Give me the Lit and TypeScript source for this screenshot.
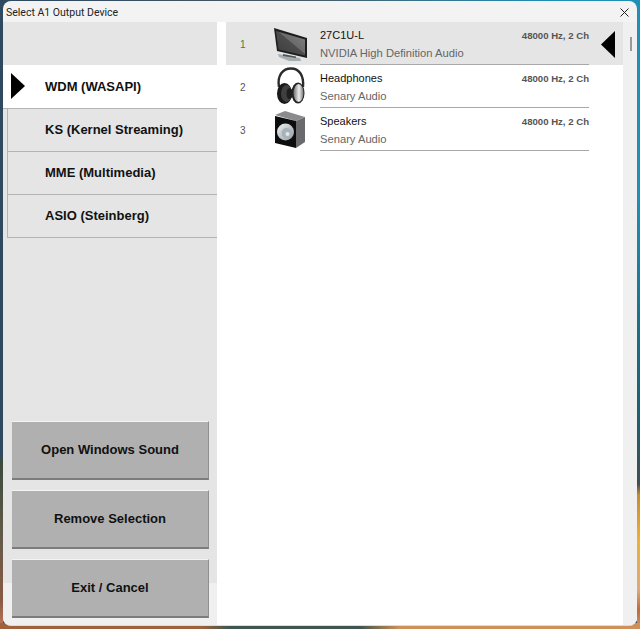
import { LitElement, html, css, svg } from "lit";
import { customElement } from "lit/decorators.js";

const monitor = svg`<svg width="48" height="43" viewBox="0 0 48 43">
<defs><linearGradient id="scr" x1="0" y1="1" x2="1" y2="0"><stop offset="0" stop-color="#3c3c3c"/><stop offset=".52" stop-color="#4c4c4c"/><stop offset=".54" stop-color="#6a6a6a"/><stop offset="1" stop-color="#858585"/></linearGradient></defs>
<path d="M6 32 L28 36 L29 39 L17 39 L7 35 Z" fill="#a3adb2"/>
<path d="M11 32 L24 34.500 L24 36 L11 34 Z" fill="#555"/>
<path d="M2 6 L35 16 L35 36 L5 29 Z" fill="#1e1e1e"/>
<path d="M4 9 L33 17.500 L33 33.500 L6.500 27.500 Z" fill="url(#scr)"/>
</svg>`;

const phones = svg`<svg width="48" height="43" viewBox="0 0 48 43">
<defs><linearGradient id="cup" x1="0" y1="0" x2="1" y2="0"><stop offset="0" stop-color="#6f6f6f"/><stop offset=".55" stop-color="#eeeeee"/><stop offset="1" stop-color="#777"/></linearGradient></defs>
<path d="M7 22 C5 10 11 3.500 19 3.500 C27 3.500 32 10 31 22" fill="none" stroke="#2b2b2b" stroke-width="2.400"/>
<ellipse cx="12.500" cy="28.500" rx="7.500" ry="10.500" fill="#191919"/>
<ellipse cx="14.500" cy="28.500" rx="5.500" ry="8.500" fill="#3f3f3f"/>
<ellipse cx="17.500" cy="28.500" rx="3" ry="5.500" fill="#1e1e1e"/>
<ellipse cx="26" cy="28" rx="6.500" ry="10.500" fill="#222"/>
<ellipse cx="26.500" cy="28" rx="5" ry="9" fill="url(#cup)"/>
</svg>`;

const speaker = svg`<svg width="48" height="43" viewBox="0 0 48 43">
<defs><linearGradient id="sp" x1="0" y1="0" x2="1" y2="1"><stop offset="0" stop-color="#f0f3f5"/><stop offset="1" stop-color="#8f9ba2"/></linearGradient></defs>
<path d="M3 7 L13 3 L33 9 L24 13 Z" fill="#8b8b8e"/>
<path d="M24 13 L33 9 L33 34 L24 40 Z" fill="#6a6a6d"/>
<path d="M3 8 L24 13 L24 40 L3 35 Z" fill="#0d0d0d"/>
<circle cx="13.500" cy="24" r="8.500" fill="url(#sp)"/>
<circle cx="14.500" cy="25" r="5" fill="#a8b3b9"/>
<circle cx="15.500" cy="26" r="2" fill="#e2e7ea"/>
</svg>`;

const rows = [
  { n: 1, name: "27C1U-L", sub: "NVIDIA High Definition Audio", icon: monitor, sel: true },
  { n: 2, name: "Headphones", sub: "Senary Audio", icon: phones, sel: false },
  { n: 3, name: "Speakers", sub: "Senary Audio", icon: speaker, sel: false },
];
const tabs = ["WDM (WASAPI)", "KS (Kernel Streaming)", "MME (Multimedia)", "ASIO (Steinberg)"];
const buttons = ["Open Windows Sound", "Remove Selection", "Exit / Cancel"];

@customElement("app-root")
export class AppRoot extends LitElement {
  static styles = css`
    :host {
      display: block;
      width: 640px;
      height: 629px;
      overflow: hidden;
      box-sizing: border-box;
      padding: 1px 3px 3px 3px;
      font-family: "Liberation Sans", Arial, sans-serif;
      background-color: #2f4a60;
      background-image:
        linear-gradient(90deg, #a0623c 0 200px, #3f5550 230px 360px, #d0905a 400px 640px),
        linear-gradient(180deg, #2f4a60 0 455px, #3c4a3c 462px, #5e5a48 530px, #8a5a45 600px, #c07a58 100%),
        linear-gradient(180deg, #1f8fb5 0 200px, #1c6f88 330px, #1d5f70 420px, #444c52 484px, #c98a30 495px, #f0b030 540px, #e0a878 590px, #c06a3a 610px, #d09a60 100%),
        linear-gradient(90deg, #2f4a60 0 60px, #4a5a66 300px, #1f8fb5 560px);
      background-size: 100% 6px, 3px 100%, 3px 100%, 100% 12px;
      background-position: 0 100%, 0 0, 100% 0, 0 0;
      background-repeat: no-repeat;
    }
    .window {
      height: 100%;
      box-sizing: border-box;
      background: #f3f3f3;
      border-radius: 8px;
      border-bottom: 1px solid #dcdcdc;
      display: flex;
      flex-direction: column;
      overflow: hidden;
    }
    .title {
      height: 21px;
      flex: none;
      box-sizing: border-box;
      display: flex;
      align-items: center;
      justify-content: space-between;
      padding: 1px 8px 0 3px;
      font: 10.500px Roboto, "Liberation Sans", sans-serif;
      color: #222;
    }
    .close { display: block; }
    .body { flex: 1; display: flex; min-height: 0; }
    .left {
      width: 214px;
      flex: none;
      background: linear-gradient(180deg, #e5e5e5 0 561px, #f0f0f0 561px);
      display: flex;
      flex-direction: column;
    }
    .spacer { height: 43px; flex: none; }
    .tab {
      height: 43px;
      flex: none;
      box-sizing: border-box;
      margin-left: 4px;
      border-left: 1px solid #b4b4b4;
      border-bottom: 1px solid #b4b4b4;
      display: flex;
      align-items: center;
      padding: 0 0 2px 37px;
      font-size: 13px;
      font-weight: 700;
      color: #111;
    }
    .tab.on {
      height: 44px;
      padding: 0 0 1px 8px;
      background: #fff;
      margin-left: 0;
      border-left: none;
      gap: 20px;
    }
    .tab.on .tri { flex: none; display: block; }
    .btns {
      margin-top: auto;
      padding: 0 8px 7px 9px;
      display: flex;
      flex-direction: column;
      gap: 10px;
    }
    .btn {
      height: 59px;
      box-sizing: border-box;
      background: #b0b0b0;
      border-top: 1px solid #f4f4f4;
      border-right: 1px solid #8f8f8f;
      border-bottom: 2px solid #7c7c7c;
      padding-bottom: 1px;
      display: flex;
      align-items: center;
      justify-content: center;
      font-size: 13px;
      font-weight: 700;
      color: #111;
    }
    .main { flex: 1; background: #fff; padding-left: 9px; display: flex; min-width: 0; }
    .list { flex: 1; min-width: 0; display: flex; flex-direction: column; }
    .row {
      height: 43px;
      flex: none;
      display: flex;
      align-items: stretch;
      position: relative;
    }
    .row.sel { background: #e5e5e5; }
    .num {
      width: 46px;
      flex: none;
      box-sizing: border-box;
      padding: 1px 0 0 14px;
      display: flex;
      align-items: center;
      font-size: 10px;
      color: #555;
    }
    .row.sel .num { color: #2f8a40; }
    .ico { width: 48px; flex: none; display: flex; }
    .info {
      width: 269px;
      flex: none;
      box-sizing: border-box;
      border-bottom: 1px solid #a8a8a8;
      display: flex;
      justify-content: space-between;
      padding-top: 6px;
    }
    .name { font-size: 11px; line-height: 14px; color: #111; }
    .sub { font-size: 11.200px; line-height: 14px; margin-top: 4px; color: #666; }
    .rate { font-size: 9.600px; font-weight: 700; color: #555; line-height: 13px; padding-top: 1px; }
    .arrow { position: absolute; left: 375px; top: 9px; display: block; }
    .scroll { width: 14px; flex: none; background: #f0f0f0; padding: 15px 0 0 7px; box-sizing: border-box; }
    .thumb { width: 2px; height: 14px; background: #9a9a9a; }
  `;

  render() {
    return html`<div class="window">
      <div class="title">
        <span>Select A1 Output Device</span>
        <svg class="close" width="9" height="9" viewBox="0 0 9 9"><path d="M.5 .5 L8.500 8.500 M8.500 .5 L.5 8.500" stroke="#222" stroke-width="1" fill="none"/></svg>
      </div>
      <div class="body">
        <div class="left">
          <div class="spacer"></div>
          ${tabs.map((t, i) => i === 0
            ? html`<div class="tab on"><svg class="tri" width="14" height="26" viewBox="0 0 14 26"><path d="M0 0 L14 13 L0 26 Z" fill="#000"/></svg><span>${t}</span></div>`
            : html`<div class="tab">${t}</div>`)}
          <div class="btns">${buttons.map((b) => html`<div class="btn">${b}</div>`)}</div>
        </div>
        <div class="main">
          <div class="list">
            ${rows.map((r) => html`<div class="row ${r.sel ? "sel" : ""}">
              <div class="num">${r.n}</div>
              <div class="ico">${r.icon}</div>
              <div class="info">
                <div><div class="name">${r.name}</div><div class="sub">${r.sub}</div></div>
                <div class="rate">48000 Hz, 2 Ch</div>
              </div>
              ${r.sel ? html`<svg class="arrow" width="14" height="27" viewBox="0 0 14 27"><path d="M14 0 L0 13.500 L14 27 Z" fill="#000"/></svg>` : ""}
            </div>`)}
          </div>
          <div class="scroll"><div class="thumb"></div></div>
        </div>
      </div>
    </div>`;
  }
}
